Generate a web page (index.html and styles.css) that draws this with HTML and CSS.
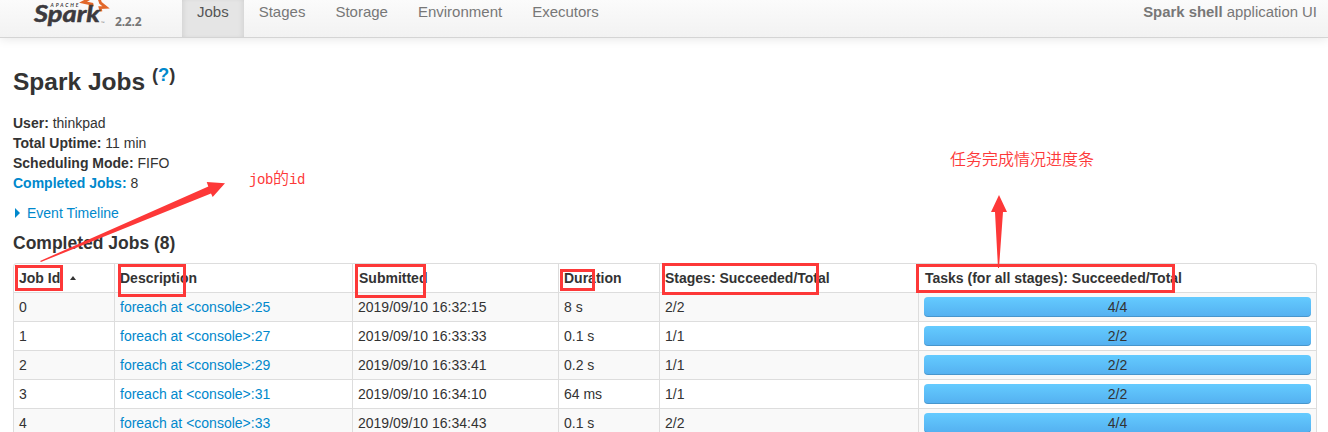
FILE: index.html
```html
<!DOCTYPE html>
<html lang="en">
<head>
<meta charset="utf-8">
<title>Spark Jobs</title>
<link rel="stylesheet" href="styles.css">
</head>
<body>
<header class="navbar">
  <div class="brand">
    <svg class="logo" width="76" height="37" viewBox="0 0 76 37">
      <path class="star" d="M56 -1 L50 2.200 L59 4.200 L59.500 6.500 M65.500 -3 L67.500 2.800 L73 7.300 L67 7.500 L68 11.500"/>
      <text class="logo-small" x="17.500" y="6.500" textLength="28">APACHE</text>
      <text class="logo-word" x="1" y="22" textLength="66" lengthAdjust="spacingAndGlyphs">Spark</text>
      <text class="logo-tm" x="67.500" y="24">™</text>
    </svg>
    <span class="version">2.2.2</span>
  </div>
  <nav class="tabs">
    <a class="tab active">Jobs</a><a class="tab">Stages</a><a class="tab">Storage</a><a class="tab">Environment</a><a class="tab">Executors</a>
  </nav>
  <p class="app-name"><strong>Spark shell</strong> application UI</p>
</header>
<main class="content">
  <h3 class="title">Spark Jobs <sup>(<a>?</a>)</sup></h3>
  <ul class="summary">
    <li><strong>User:</strong> thinkpad</li>
    <li><strong>Total Uptime:</strong> 11 min</li>
    <li><strong>Scheduling Mode:</strong> FIFO</li>
    <li><a><strong>Completed Jobs:</strong></a> 8</li>
  </ul>
  <div class="timeline"><span class="caret"></span><a>Event Timeline</a></div>
  <h4 class="subtitle">Completed Jobs (8)</h4>
  <table class="jobs">
    <colgroup><col class="c-id"><col class="c-desc"><col class="c-sub"><col class="c-dur"><col class="c-stages"><col class="c-tasks"></colgroup>
    <thead>
      <tr><th>Job Id <span class="sort"></span></th><th>Description</th><th class="nudge">Submitted</th><th>Duration</th><th>Stages: Succeeded/Total</th><th>Tasks (for all stages): Succeeded/Total</th></tr>
    </thead>
    <tbody>
      <tr><td>0</td><td><a>foreach at &lt;console&gt;:25</a></td><td>2019/09/10 16:32:15</td><td>8 s</td><td>2/2</td><td><div class="bar">4/4</div></td></tr>
      <tr><td>1</td><td><a>foreach at &lt;console&gt;:27</a></td><td>2019/09/10 16:33:33</td><td>0.1 s</td><td>1/1</td><td><div class="bar">2/2</div></td></tr>
      <tr><td>2</td><td><a>foreach at &lt;console&gt;:29</a></td><td>2019/09/10 16:33:41</td><td>0.2 s</td><td>1/1</td><td><div class="bar">2/2</div></td></tr>
      <tr><td>3</td><td><a>foreach at &lt;console&gt;:31</a></td><td>2019/09/10 16:34:10</td><td>64 ms</td><td>1/1</td><td><div class="bar">2/2</div></td></tr>
      <tr><td>4</td><td><a>foreach at &lt;console&gt;:33</a></td><td>2019/09/10 16:34:43</td><td>0.1 s</td><td>2/2</td><td><div class="bar">4/4</div></td></tr>
    </tbody>
  </table>
</main>
<svg class="notes" width="1328" height="432" viewBox="0 0 1328 432">
  <g class="boxes">
    <rect x="16.500" y="266.500" width="45" height="23"/>
    <rect x="119.500" y="265.500" width="65" height="30"/>
    <rect x="356.500" y="265.500" width="68" height="31"/>
    <rect x="561.500" y="270.500" width="32" height="19"/>
    <rect x="663.500" y="264.500" width="154" height="29"/>
    <rect x="917.500" y="265.500" width="256" height="26"/>
  </g>
  <path class="arrow" d="M40 261 L208.300 186.500 L206.700 182 L225 183.300 L212.700 197 L211 193.500 L41 262 Z"/>
  <path class="arrow" d="M998 268 L995 212 L991 212 L999 195 L1007 212 L1003 212 L999 268 Z"/>
  <text class="note" x="249" y="184"><tspan class="note-latin">job</tspan>的<tspan class="note-latin">id</tspan></text>
  <text class="note" x="950" y="165">任务完成情况进度条</text>
</svg>
</body>
</html>
```
FILE: styles.css
```css
body {
  margin: 0;
  height: 432px;
  overflow: hidden;
  background: #fff;
  color: #333;
  font: 14px/20px "Liberation Sans", Arial, sans-serif;
}
a { color: #0088cc; }
.navbar {
  display: flex;
  height: 37px;
  background: linear-gradient(#fbfbfb, #f2f2f2);
  border-bottom: 1px solid #d4d4d4;
  box-shadow: 0 1px 10px rgba(0, 0, 0, 0.1);
  color: #777;
  font-size: 15px;
}
.brand {
  display: flex;
  width: 149px;
  padding-left: 33px;
}
.logo { flex: none; overflow: visible; }
.star { fill: none; stroke: #e2682b; stroke-width: 2.800; }
.logo-small { fill: #3c3a3e; font: italic bold 5px Lato, sans-serif; }
.logo-word {
  fill: #3c3a3e;
  stroke: #3c3a3e;
  stroke-width: 0.500;
  font: italic bold 23px Lato, sans-serif;
}
.logo-tm { fill: #777; font: 4px "Liberation Sans", sans-serif; }
.version {
  margin: 12px 0 0 6px;
  font: bold 12px/20px "Noto Sans", sans-serif;
  letter-spacing: -0.200px;
  color: #777;
}
.tabs { display: flex; }
.tab {
  padding: 2px 15px 15px;
  color: #777;
}
.tab.active {
  background: #e5e5e5;
  box-shadow: inset 4px 0 6px -4px rgba(0, 0, 0, 0.12), inset -4px 0 6px -4px rgba(0, 0, 0, 0.12);
  color: #555;
}
.app-name { margin: 2px 11px 0 auto; font-size: 14.900px; }
.content { padding: 24px 11px 0 13px; }
.title {
  margin: 0;
  font-size: 24.500px;
  line-height: 40px;
}
.title sup {
  position: relative;
  top: -0.500em;
  font-size: 75%;
  line-height: 0;
  vertical-align: baseline;
}
.summary {
  margin: 11px 0 10px;
  padding: 0;
  list-style: none;
}
.timeline { display: flex; align-items: center; }
.caret {
  margin: 0 7px 0 2px;
  border: 5px solid transparent;
  border-left-color: #0088cc;
  border-right: 0;
}
.subtitle {
  margin: 10px 0;
  font-size: 17.500px;
  line-height: 20px;
}
.jobs {
  width: 1304px;
  table-layout: fixed;
  border: 1px solid #ddd;
  border-left: 0;
  border-radius: 4px;
  border-collapse: separate;
  border-spacing: 0;
}
.c-id, .c-dur { width: 101px; }
.c-desc { width: 238px; }
.c-sub { width: 206px; }
.c-stages { width: 259px; }
.jobs th, .jobs td {
  height: 20px;
  padding: 4px 5px;
  border-left: 1px solid #ddd;
  text-align: left;
  white-space: nowrap;
}
.jobs th:first-child { border-top-left-radius: 4px; }
.jobs td { border-top: 1px solid #ddd; }
.jobs tbody tr:nth-child(odd) td { background: #f9f9f9; }
.jobs th:last-child { padding-left: 6px; }
.jobs th.nudge { padding-left: 6px; }
.sort {
  display: inline-block;
  margin-left: 6px;
  border: 3px solid transparent;
  border-bottom: 4px solid #333;
  border-top: 0;
  vertical-align: 3px;
}
.bar {
  height: 20px;
  border-radius: 4px;
  background: linear-gradient(#64cbff, #54b0f0);
  box-shadow: inset 0 -1px 0 rgba(0, 0, 0, 0.15);
  text-align: center;
}
.notes { position: absolute; top: 0; left: 0; }
.boxes { fill: none; stroke: #fd3838; stroke-width: 3; }
.arrow { fill: #fd3838; }
.note { fill: #fd3838; font: 350 16px "Noto Sans CJK SC", sans-serif; }
.note-latin { font: 14px "Liberation Mono", monospace; letter-spacing: -0.400px; }
```
